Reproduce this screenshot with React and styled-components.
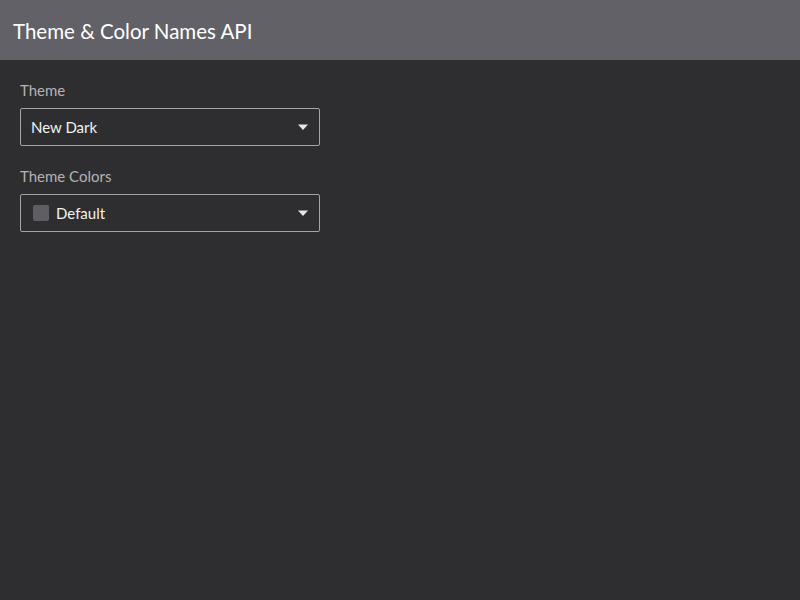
import React from "react";
import styled, { createGlobalStyle } from "styled-components";

const Global = createGlobalStyle`
  html, body {
    margin: 0;
    padding: 0;
    background: #2e2e30;
    font-family: Lato, "Noto Sans", sans-serif;
  }
`;

const Page = styled.div`
  width: 800px;
  height: 600px;
  background: #2e2e30;
  display: flex;
  flex-direction: column;
`;

const Header = styled.header`
  height: 60px;
  background: #626167;
  display: flex;
  align-items: center;
  padding: 2px 13px 0;
  box-sizing: border-box;
  color: #ffffff;
  font-size: 20.5px;
`;

const Content = styled.main`
  padding: 20px 20px;
  display: flex;
  flex-direction: column;
  gap: 20px;
`;

const Field = styled.div`
  display: flex;
  flex-direction: column;
  gap: 8px;
`;

const Label = styled.label`
  color: #b3b3b5;
  font-size: 15px;
  line-height: 20px;
`;

const Select = styled.div`
  width: 300px;
  height: 38px;
  box-sizing: border-box;
  border: 1px solid #a4a4a6;
  border-radius: 2px;
  display: flex;
  align-items: center;
  padding: 0 10px 0 ${(p) => (p.$swatch ? "12px" : "10px")};
  gap: 7px;
  color: #f2f2f2;
  font-size: 15px;
`;

const Value = styled.span`
  flex: 1;
`;

const Swatch = styled.span`
  width: 16px;
  height: 16px;
  border-radius: 2px;
  background: #5f5e63;
`;

const Arrow = () => (
  <svg width="12" height="8" viewBox="0 0 12 8">
    <path d="M1 1.5 L11 1.5 L6 7 Z" fill="#e6e6e6" />
  </svg>
);

function App() {
  return (
    <Page>
      <Global />
      <Header>Theme &amp; Color Names API</Header>
      <Content>
        <Field>
          <Label>Theme</Label>
          <Select>
            <Value>New Dark</Value>
            <Arrow />
          </Select>
        </Field>
        <Field>
          <Label>Theme Colors</Label>
          <Select $swatch>
            <Swatch />
            <Value>Default</Value>
            <Arrow />
          </Select>
        </Field>
      </Content>
    </Page>
  );
}

export default App;
